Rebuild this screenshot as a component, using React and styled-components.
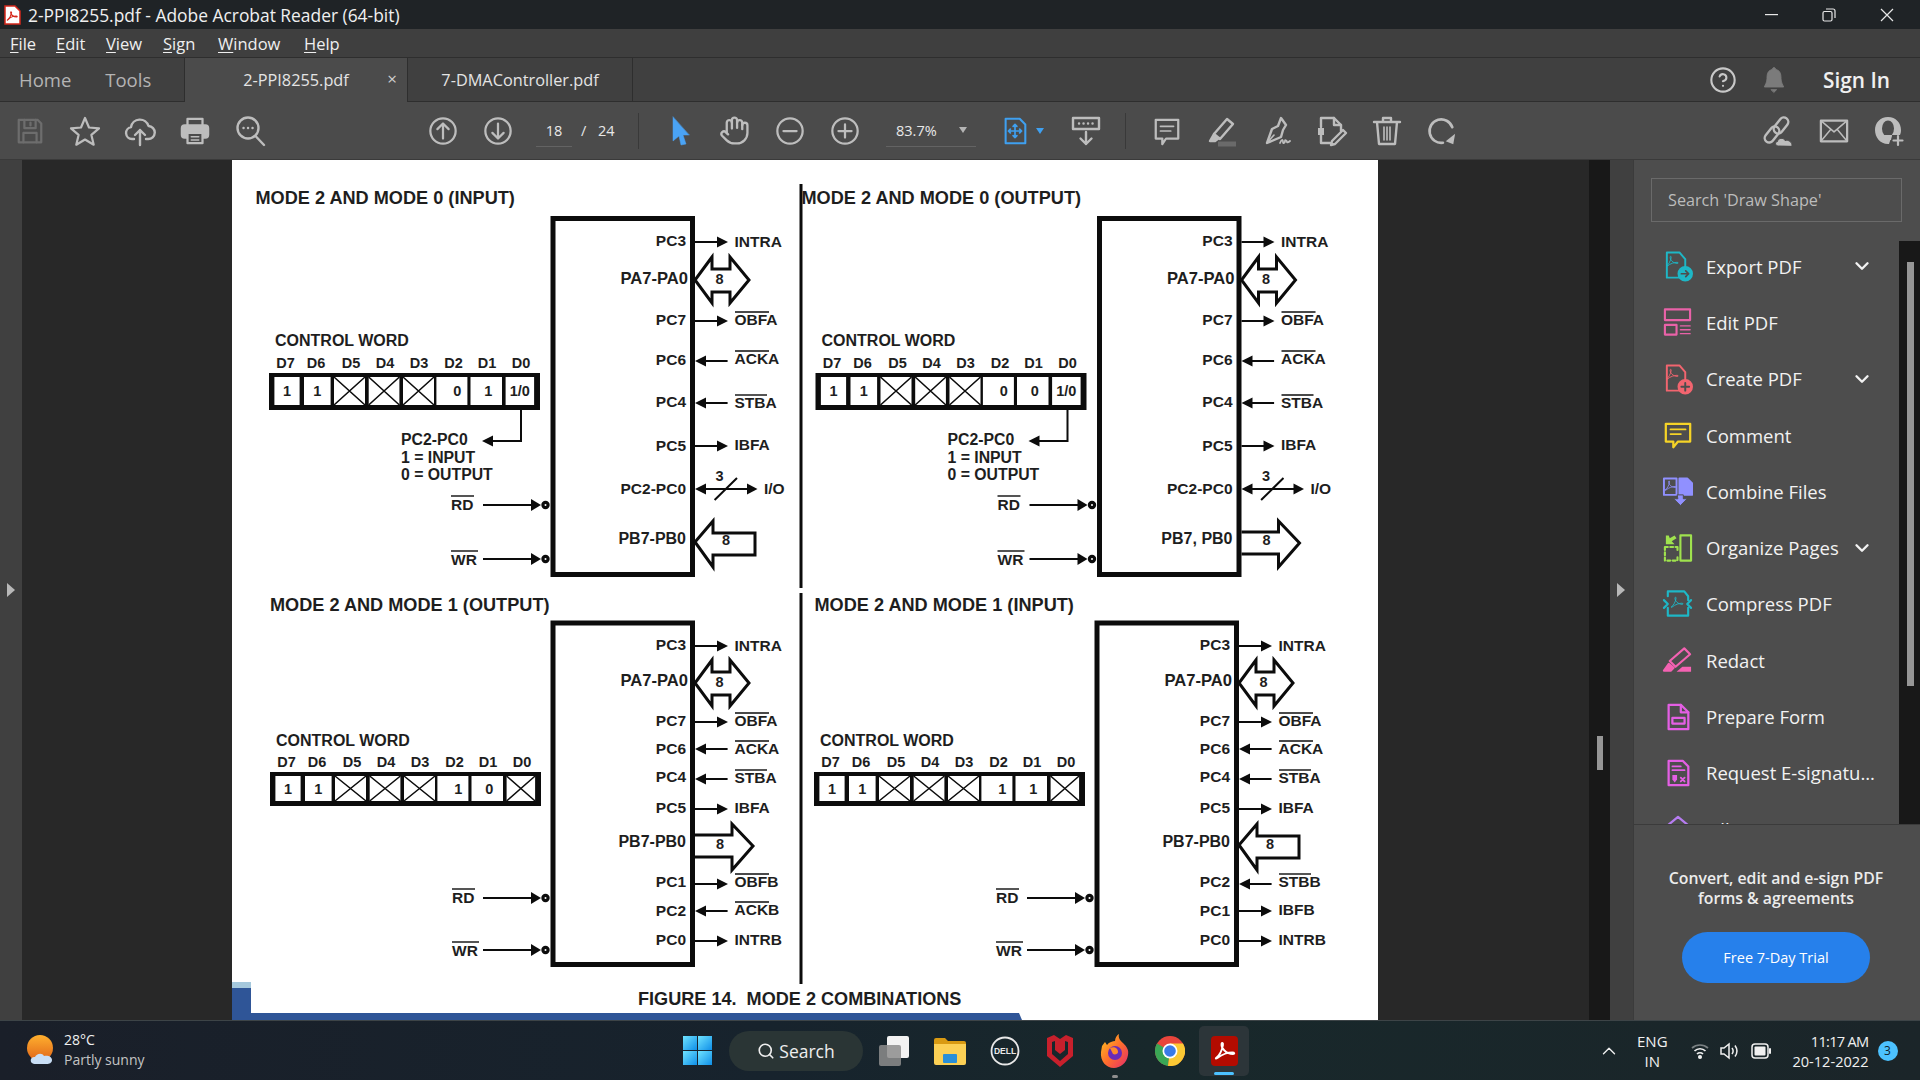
import React from "react"
import styled, { createGlobalStyle } from "styled-components"
import { CircleHelp, Hand, Search, ChevronDown, ChevronUp } from "lucide-react"

const GlobalStyle = createGlobalStyle`
  html, body {
    margin: 0;
    padding: 0;
    background: #282828;
  }
  body {
    font-family: "Open Sans", "Noto Sans", sans-serif;
    overflow: hidden;
  }
`

const Screen = styled.div`
  width: 1920px;
  height: 1080px;
  display: flex;
  flex-direction: column;
  overflow: hidden;
`

/* window chrome */
const TitleBar = styled.div`
  height: 29px;
  flex: none;
  display: flex;
  align-items: center;
  background: #1f2326;
  color: #f0f0f0;
  font-size: 17.4px;
  padding: 0 4px;
`
const TitleText = styled.span`
  flex: 1;
  margin-left: 7px;
`
const WinBtn = styled.span`
  width: 58px;
  height: 29px;
  display: flex;
  align-items: center;
  justify-content: center;
  color: #e8e8e8;
`
const MenuBar = styled.div`
  height: 28px;
  flex: none;
  display: flex;
  align-items: center;
  background: #3f3f3f;
  border-bottom: 1px solid #2e2e2e;
  color: #efefef;
  font-size: 16.5px;
  padding-left: 10px;
`
const MenuItem = styled.span`
  width: ${(p) => p.$w}px;
  u {
    text-underline-offset: 2px;
  }
`
const TabBar = styled.div`
  height: 44px;
  flex: none;
  display: flex;
  background: #404040;
  color: #c9c9c9;
`
const NavTabs = styled.div`
  width: 184px;
  display: flex;
  align-items: center;
  gap: 34px;
  padding-left: 19px;
  box-sizing: border-box;
  font-size: 18.5px;
  color: #b4b4b4;
  border-bottom: 1px solid #2e2e2e;
`
const DocTab = styled.div`
  position: relative;
  width: ${(p) => p.$w}px;
  display: flex;
  align-items: center;
  justify-content: center;
  box-sizing: border-box;
  font-size: 16.3px;
  color: #e4e4e4;
  background: ${(p) => (p.$active ? "#4b4b4b" : "#404040")};
  border-left: ${(p) => (p.$active ? "1px solid #2e2e2e" : "none")};
  border-right: 1px solid #2e2e2e;
  border-bottom: ${(p) => (p.$active ? "none" : "1px solid #2e2e2e")};
`
const TabClose = styled.span`
  position: absolute;
  right: 10px;
  top: 9px;
  font-size: 17px;
  color: #cfcfcf;
`
const TabFill = styled.div`
  flex: 1;
  display: flex;
  align-items: center;
  justify-content: flex-end;
  border-bottom: 1px solid #2e2e2e;
  padding-right: 30px;
`
const SignIn = styled.span`
  font-size: 20.8px;
  font-weight: 600;
  color: #f0f0f0;
  margin-left: 35px;
`
const BellWrap = styled.span`
  display: flex;
  margin-left: 23px;
`

/* toolbar */
const ToolBar = styled.div`
  height: 58px;
  flex: none;
  display: flex;
  align-items: center;
  background: #4b4b4b;
  padding-left: 2px;
  border-bottom: 1px solid #3a3a3a;
  box-sizing: border-box;
`
const Tool = styled.span`
  width: ${(p) => p.$w || 55}px;
  margin-left: ${(p) => p.$ml || 0}px;
  display: flex;
  align-items: center;
  justify-content: center;
  color: ${(p) => p.$c || "#bdbdbd"};
`
const ToolDivider = styled.span`
  width: 1px;
  height: 36px;
  background: #393939;
  margin-left: ${(p) => p.$ml}px;
`
const PageBox = styled.div`
  margin-left: 11px;
  width: 36px;
  height: 33px;
  box-sizing: border-box;
  border-bottom: 1px solid #636363;
  display: flex;
  align-items: center;
  justify-content: center;
  color: #e8e8e8;
  font-size: 14.5px;
`
const PageTotal = styled.span`
  margin-left: 9px;
  width: 57px;
  color: #e8e8e8;
  font-size: 14.5px;
  word-spacing: 8px;
`
const ZoomBox = styled.div`
  margin-left: 14px;
  width: 90px;
  height: 33px;
  box-sizing: border-box;
  border-bottom: 1px solid #636363;
  display: flex;
  align-items: center;
  color: #e8e8e8;
  font-size: 14.5px;
  padding-left: 10px;
  gap: 22px;
`
const Caret = styled.span`
  width: 0;
  height: 0;
  border-left: 4px solid transparent;
  border-right: 4px solid transparent;
  border-top: 6px solid ${(p) => p.$c || "#b4b4b4"};
`
const FitTool = styled.span`
  margin-left: 12px;
  width: 70px;
  display: flex;
  align-items: center;
  justify-content: flex-start;
  gap: 6px;
  padding-left: 12px;
  box-sizing: border-box;
`

/* main area */
const Main = styled.div`
  flex: 1;
  display: flex;
  min-height: 0;
`
const LeftRail = styled.div`
  width: 22px;
  flex: none;
  background: #404040;
  display: flex;
  align-items: center;
  padding-left: 7px;
  box-sizing: border-box;
`
const DocArea = styled.div`
  flex: none;
  width: 1567px;
  background: #282828;
  padding-left: 210px;
  box-sizing: border-box;
`
const Sheet = styled.svg`
  display: block;
  width: 1146px;
  height: 860px;
  background: #fff;
`
const DocScroll = styled.div`
  width: 21px;
  flex: none;
  background: #181818;
  padding: 576px 0 0 8px;
  box-sizing: border-box;
`
const DocThumb = styled.div`
  width: 6px;
  height: 34px;
  background: #969696;
`
const RightRail = styled.div`
  width: 23px;
  flex: none;
  background: #404040;
  display: flex;
  align-items: center;
  padding-left: 7px;
  box-sizing: border-box;
`
const Triangle = styled.span`
  width: 0;
  height: 0;
  border-top: 7px solid transparent;
  border-bottom: 7px solid transparent;
  border-left: 8px solid #b8b8b8;
`
const SidePanel = styled.div`
  flex: 1;
  display: flex;
  flex-direction: column;
  background: #4d4d4d;
  border-left: 1px solid #3b3b3b;
  min-width: 0;
`
const SearchBox = styled.div`
  flex: none;
  height: 44px;
  width: 251px;
  box-sizing: border-box;
  margin: 18px 0 17px 17px;
  border: 1px solid #6a6a6a;
  color: #bcbcbc;
  font-size: 16.2px;
  display: flex;
  align-items: center;
  padding-left: 16px;
`
const ListWrap = styled.div`
  height: 585px;
  flex: none;
  display: flex;
  overflow: hidden;
`
const ToolList = styled.div`
  flex: 1;
  min-width: 0;
  margin-top: -1px;
`
const ToolRow = styled.div`
  height: 56.3px;
  display: flex;
  align-items: center;
  padding: 0 20px 0 28px;
  gap: 13px;
  color: #f2f2f2;
  font-size: 18.5px;
  white-space: nowrap;
`
const ToolIcon = styled.span`
  width: 31px;
  flex: none;
  display: flex;
  justify-content: center;
`
const ToolLabel = styled.span`
  flex: 1;
  white-space: nowrap;
`
const MoreChevron = styled(ChevronDown)`
  flex: none;
  margin: 0 6px 0 -20px;
`
const ListScroll = styled.div`
  width: 21px;
  flex: none;
  margin-top: 2px;
  background: #181818;
  padding: 21px 0 0 8px;
  box-sizing: border-box;
`
const ListThumb = styled.div`
  width: 7px;
  height: 424px;
  background: #969696;
`
const Promo = styled.div`
  flex: 1;
  border-top: 1px solid #3b3b3b;
  display: flex;
  flex-direction: column;
  align-items: center;
  padding: 43px 2px 0 0;
  color: #ececec;
  font-size: 15.8px;
  font-weight: 600;
  line-height: 20px;
  text-align: center;
`
const TrialBtn = styled.div`
  margin-top: 24px;
  width: 188px;
  height: 51px;
  border-radius: 26px;
  background: #2680eb;
  color: #fff;
  font-size: 14.5px;
  font-weight: 400;
  display: flex;
  align-items: center;
  justify-content: center;
`

/* taskbar */
const TaskBar = styled.div`
  height: 60px;
  flex: none;
  display: flex;
  align-items: center;
  border-top: 1px solid #3d4447;
  box-sizing: border-box;
  background: linear-gradient(90deg, #1a1f29 0%, #17232d 40%, #18282b 60%, #1b2529 100%);
  color: #f0f0f0;
`
const Weather = styled.div`
  width: 683px;
  flex: none;
  display: flex;
  align-items: center;
  padding: 0 0 2px 27px;
  gap: 9px;
  box-sizing: border-box;
`
const TwoLines = styled.div`
  display: flex;
  flex-direction: column;
  font-size: ${(p) => p.$size || 14}px;
  line-height: 20px;
  text-align: ${(p) => p.$align || "left"};
`
const Dim = styled.span`
  color: #c4c4c4;
`
const WinLogo = styled.span`
  width: 46px;
  flex: none;
  display: flex;
`
const SearchPill = styled.div`
  width: 134px;
  height: 40px;
  flex: none;
  border-radius: 20px;
  background: #2a3535;
  display: flex;
  align-items: center;
  justify-content: center;
  gap: 4px;
  font-size: 17.5px;
  color: #eee;
`
const TaskSlot = styled.span`
  position: relative;
  width: 55px;
  height: 50px;
  flex: none;
  display: flex;
  align-items: center;
  justify-content: center;
  margin-left: ${(p) => p.$ml || 0}px;
  ${(p) => p.$active && "background: #2c3539; border-radius: 5px; width: 50px; margin: 0 2px;"}
`
const Running = styled.span`
  position: absolute;
  left: 50%;
  bottom: ${(p) => p.$bottom}px;
  width: ${(p) => p.$w}px;
  height: 3px;
  margin-left: ${(p) => -p.$w / 2}px;
  border-radius: 2px;
  background: ${(p) => p.$c};
`
const Tray = styled.div`
  flex: 1;
  display: flex;
  align-items: center;
  padding-left: 347px;
`
const TrayIcon = styled.span`
  display: flex;
  margin-left: ${(p) => p.$ml}px;
`
const Clock = styled(TwoLines)`
  margin-left: 4px;
  width: 93px;
  white-space: nowrap;
  font-size: 14.6px;
`
const ClockTime = styled.span`
  letter-spacing: -0.7px;
`
const Badge = styled.span`
  width: 20px;
  height: 20px;
  border-radius: 50%;
  margin-left: 9px;
  background: #4cc2ff;
  color: #10222c;
  font-size: 12px;
  display: flex;
  align-items: center;
  justify-content: center;
`

/* icons */
const Ico = styled.svg.attrs((p) => ({
  viewBox: "0 0 32 32",
  width: p.$s || 30,
  height: p.$s || 30,
}))`
  display: block;
  fill: none;
  stroke: ${(p) => p.$c || "currentColor"};
  stroke-width: ${(p) => p.$w || 2.4};
  stroke-linecap: round;
  stroke-linejoin: round;
`
const Swoosh = ({ transform, c, w = 1.4 }) => (
  <path
    transform={transform}
    d="M6 23c3-2 6-8 7-13 .4-2.4-1.4-3.4-1.6-1C11 13 16 19 23 19c2 0 1.6-1.8-.6-1.800-4 0-11 2-15.4 6-1 1-1.6.6-1-.2z"
    fill="none"
    stroke={c}
    strokeWidth={w}
  />
)

const SaveIcon = () => (
  <Ico $c="#6d6d6d" $s={30}>
    <path d="M4 4h20l4 4v20H4z" />
    <path d="M10 4v9h12V4M16.5 7v3M9 28V18h14v10" />
  </Ico>
)
const StarIcon = () => (
  <Ico $s={32} $w={2.2}>
    <path d="M16 3l4 9.5 10 .8-7.6 6.6 2.3 9.8L16 24.5l-8.700 5.200 2.300-9.800L2 13.3l10-.8z" />
  </Ico>
)
const UploadIcon = () => (
  <Ico $s={32}>
    <path d="M10 24H8a6 6 0 0 1-1-11.900A9 9 0 0 1 24.500 11 6.500 6.500 0 0 1 24 24h-2" />
    <path d="M16 30V15M11 20l5-5 5 5" />
  </Ico>
)
const PrintIcon = () => (
  <Ico $s={30}>
    <path d="M8 10V3h16v7" />
    <rect x="2" y="10" width="28" height="13" rx="3" fill="currentColor" />
    <rect x="8" y="18" width="16" height="11" fill="#4b4b4b" />
    <path d="M12 22h8M12 25.500h8" strokeWidth="1.600" />
  </Ico>
)
const FindIcon = () => (
  <Ico $s={32}>
    <circle cx="14" cy="13" r="10.500" />
    <path d="M21.500 21l8.500 9" />
    <path d="M9.500 13h.1M14 13h.1M18.500 13h.1" />
  </Ico>
)
const CircleUp = ({ down }) => (
  <Ico $s={30}>
    <circle cx="16" cy="16" r="13.500" />
    {down ? <path d="M16 8v16M10 18l6 6 6-6" /> : <path d="M16 24V8M10 14l6-6 6 6" />}
  </Ico>
)
const CircleMath = ({ plus }) => (
  <Ico $s={30}>
    <circle cx="16" cy="16" r="13.500" />
    <path d={plus ? "M9 16h14M16 9v14" : "M9 16h14"} />
  </Ico>
)
const CursorIcon = () => (
  <Ico $s={32} $c="#4aa3f5" $w={0.5}>
    <path d="M9 2v24l6-5 2 9 5-1-3-9h6z" fill="#4aa3f5" />
  </Ico>
)
const FitIcon = () => (
  <Ico $s={30} $c="#3fa0f0" $w={2.2}>
    <path d="M6 3h15l6 6v20H6z" />
    <path d="M16 9v14M9 16h14M14 11l2-2 2 2M14 21l2 2 2-2M11 14l-2 2 2 2M21 14l2 2-2 2" strokeWidth="1.800" />
  </Ico>
)
const ReadIcon = () => (
  <Ico $s={32}>
    <rect x="3" y="3" width="26" height="11" />
    <path d="M9 8.500h.1M13.500 8.500h.1M18 8.500h.1M22.500 8.500h.1" />
    <path d="M16 17v12M10.500 23.500L16 29l5.500-5.500" />
  </Ico>
)
const CommentIcon = () => (
  <Ico $s={30}>
    <path d="M4 4h24v20H15l-4 6v-6H4z" />
    <path d="M9 11h14M9 16h11" strokeWidth="1.800" />
  </Ico>
)
const HighlightIcon = () => (
  <Ico $s={32}>
    <path d="M21 4l6 5-13 15-6-5z" />
    <path d="M8 19l-4 7h5l4-3" fill="currentColor" />
    <path d="M12 29h18" stroke="#6a6a6a" strokeWidth="5" strokeLinecap="butt" />
  </Ico>
)
const SignIcon = () => (
  <Ico $s={32}>
    <path d="M20 3l5 7-3 5-2 7-14 6 5-14 6-3z" />
    <path d="M6 28l7-8" strokeWidth="1.600" />
    <path d="M19 28c2-5 3-3 3-1s2 1 2-1 2 0 2 1 2 0 3-1" strokeWidth="1.800" />
  </Ico>
)
const EditFileIcon = () => (
  <Ico $s={32}>
    <path d="M5 12V3h13l7 7v6M5 20v8h9" />
    <path d="M2 13h6v7H2z" fill="currentColor" stroke="none" />
    <path d="M18 3v7h7" />
    <path d="M27 15l3 3-11 11-4 1 1-4z" />
  </Ico>
)
const TrashIcon = () => (
  <Ico $s={32}>
    <path d="M3 7h26M12 7V3h8v4M6 7l2 22h16l2-22" />
    <path d="M13 12v13M16 12v13M19 12v13" strokeWidth="1.600" />
  </Ico>
)
const RotateIcon = () => (
  <Ico $s={30}>
    <path d="M27 12A12.500 12.500 0 1 0 17 28.500" strokeWidth="2.800" />
    <path d="M30 19l-10 8 8 3z" fill="currentColor" stroke="none" />
  </Ico>
)
const ShareIcon = () => (
  <Ico $s={32}>
    <rect x="1" y="15" width="18" height="9" rx="4.500" transform="rotate(-52 10 19.500)" />
    <rect x="10" y="6" width="18" height="9" rx="4.500" transform="rotate(-52 19 10.500)" />
    <path d="M16 31c-3 0-3.500-4-.5-4.500 .5-3.500 6-4.500 7.500-1 3.500-1 7.500 1.500 7 5.500z" fill="currentColor" stroke="#4b4b4b" strokeWidth="1" />
  </Ico>
)
const MailIcon = () => (
  <Ico $s={30}>
    <rect x="2" y="5" width="28" height="22" />
    <path d="M2 5l14 12L30 5M2 27l10-12M30 27L20 15" strokeWidth="1.600" />
  </Ico>
)
const UserIcon = () => (
  <Ico $s={32} $w={1}>
    <path d="M15 2c8 0 13 6 13 13 0 2-.3 3.500-1 5h-8l-3 9h-1C7 29 2 22 2 15 2 8 7 2 15 2z" fill="currentColor" stroke="none" />
    <ellipse cx="15" cy="13.500" rx="6" ry="8" fill="#4b4b4b" stroke="none" />
    <path d="M11 20h8l-1 5h-6z" fill="currentColor" stroke="none" />
    <path d="M25 21v9M20.500 25.500h9" strokeWidth="2.200" />
  </Ico>
)
const BellIcon = () => (
  <Ico $s={28} $c="#7b7b7b" $w={1}>
    <path d="M16 2c1.500 0 2 1 2 2 5 1 6 5 6 10 0 5 2 7 3 10H5c1-3 3-5 3-10 0-5 1-9 6-10 0-1 .5-2 2-2z" fill="#7b7b7b" />
    <path d="M13 27h6l-3 3z" fill="#7b7b7b" />
  </Ico>
)

const PANEL_TOOLS = [
  {
    name: "Export PDF",
    more: true,
    c: "#1eb7c6",
    icon: (c) => (
      <Ico $c={c} $s={32} $w={2}>
        <path d="M5 28V2h13l6 7v8M5 28h13" />
        <Swoosh c={c} transform="translate(1 1) scale(.65)" />
        <circle cx="24" cy="24" r="7" fill={c} />
        <path d="M20 24h7M24.500 21l3 3-3 3" stroke="#4d4d4d" strokeWidth="1.800" />
      </Ico>
    ),
  },
  {
    name: "Edit PDF",
    c: "#e962a8",
    icon: (c) => (
      <Ico $c={c} $s={32} $w={2.2}>
        <rect x="3" y="3" width="26" height="11" />
        <rect x="3" y="19" width="12" height="10" />
        <path d="M19 20h10M19 24h10M19 28h10" strokeWidth="1.500" />
      </Ico>
    ),
  },
  {
    name: "Create PDF",
    more: true,
    c: "#f2656f",
    icon: (c) => (
      <Ico $c={c} $s={32} $w={2}>
        <path d="M5 28V2h13l6 7v8M5 28h13" />
        <Swoosh c={c} transform="translate(1 1) scale(.65)" />
        <circle cx="24" cy="24" r="7" fill={c} />
        <path d="M20 24h8M24 20v8" stroke="#4d4d4d" strokeWidth="2" />
      </Ico>
    ),
  },
  {
    name: "Comment",
    c: "#f5d327",
    icon: (c) => (
      <Ico $c={c} $s={30} $w={2.4}>
        <path d="M3 4h26v19H16l-5 6v-6H3z" />
        <path d="M8 10h16M8 15h11" strokeWidth="2" />
      </Ico>
    ),
  },
  {
    name: "Combine Files",
    c: "#9090ff",
    icon: (c) => (
      <Ico $c={c} $s={34} $w={2}>
        <path d="M2 3h13v17H2z" />
        <Swoosh c={c} transform="translate(0 1) scale(.6)" />
        <path d="M18 3h8l5 5v12H18z" fill={c} />
        <path d="M16 20h6v4h4l-7 7-7-7h4z" fill={c} stroke="#4d4d4d" strokeWidth="1" />
      </Ico>
    ),
  },
  {
    name: "Organize Pages",
    more: true,
    c: "#9fe24e",
    icon: (c) => (
      <Ico $c={c} $s={32} $w={2.2}>
        <rect x="19" y="3" width="11" height="26" />
        <path d="M3 15h13M3 15v14h13v-5M16 15v5" strokeDasharray="3 2.500" />
        <path d="M4 3v9h9l-3-3 5-3-2-3-5 3-1-3z" fill={c} stroke="none" />
      </Ico>
    ),
  },
  {
    name: "Compress PDF",
    c: "#1eb7c6",
    icon: (c) => (
      <Ico $c={c} $s={32} $w={2.2}>
        <path d="M6 8V3h17l4 5v4M27 20v8H6v-8" />
        <path d="M2 12l4 4-4 4M30 12l-4 4 4 4" />
        <Swoosh c={c} transform="translate(6 4) scale(.65)" />
      </Ico>
    ),
  },
  {
    name: "Redact",
    c: "#f462b2",
    icon: (c) => (
      <Ico $c={c} $s={32} $w={2.2}>
        <path d="M23 4l6 6-15 13-6-6z" />
        <path d="M7 20l-5 7h7l3-3z" fill={c} />
        <path d="M15 28l6-5h9v5z" fill={c} stroke="none" />
      </Ico>
    ),
  },
  {
    name: "Prepare Form",
    c: "#e45fe4",
    icon: (c) => (
      <Ico $c={c} $s={30} $w={2.4}>
        <path d="M6 3h13l8 8v18H6z" />
        <path d="M19 3v8h8" />
        <rect x="10" y="17" width="13" height="6" />
      </Ico>
    ),
  },
  {
    name: "Request E-signatu...",
    c: "#e45fe4",
    icon: (c) => (
      <Ico $c={c} $s={30} $w={2.4}>
        <path d="M6 3h15l6 6v20H6z" />
        <path d="M10 9h9M10 13h13" strokeWidth="1.800" />
        <path d="M10 18h5v5l-2.500 3-2.500-3z" fill={c} stroke="none" />
        <path d="M19 21l4 4M23 21l-4 4" strokeWidth="2" />
      </Ico>
    ),
  },
  {
    name: "Fill & Sign",
    c: "#b67cf0",
    icon: (c) => (
      <Ico $c={c} $s={30} $w={2.4}>
        <path d="M16 3l12 10v14H4V13z" />
      </Ico>
    ),
  },
]

/* --- the PDF page, drawn in screen coordinates --- */
const DText = styled.text`
  font-family: "Liberation Sans", Arial, sans-serif;
  font-weight: 700;
  font-size: ${(p) => p.$size || 15.5}px;
  fill: #1e1e1e;
`
const Stroke = styled.g`
  stroke: #0c0c0c;
  stroke-width: ${(p) => p.$w || 2}px;
  fill: none;
`

const CELLS = [
  [5.4, 25.2],
  [35, 26.6],
  [65, 31],
  [99.7, 30.7],
  [134, 31],
  [167.4, 31],
  [201.5, 31.5],
  [236.6, 28.5],
]
const BIT_X = [285.5, 316, 351, 385, 419, 453.5, 487, 521]
const CELL_NUDGE = [0, 0, 0, 0, 0, 5.5, 2, 0]

function Register({ top, bottom, cellTop, cellBottom, labelY, wordY, textY, values, dx = 0 }) {
  return (
    <g transform={`translate(${dx} 0)`}>
      <DText x={275} y={wordY} $size={16}>CONTROL WORD</DText>
      {BIT_X.map((x, i) => (
        <DText key={i} x={x} y={labelY} $size={14.5} textAnchor="middle">{`D${7 - i}`}</DText>
      ))}
      <rect x={269} y={top} width={271} height={bottom - top} fill="#0c0c0c" />
      {CELLS.map(([cx, w], i) => {
        const x = 269 + cx
        return (
          <g key={i}>
            <rect x={x} y={cellTop} width={w} height={cellBottom - cellTop} fill="#fff" />
            {values[i] === "X" ? (
              <Stroke $w={1.6}>
                <path d={`M${x} ${cellTop}L${x + w} ${cellBottom}M${x + w} ${cellTop}L${x} ${cellBottom}`} />
              </Stroke>
            ) : (
              <DText x={x + w / 2 + CELL_NUDGE[i]} y={textY} $size={14.5} textAnchor="middle">
                {values[i]}
              </DText>
            )}
          </g>
        )
      })}
    </g>
  )
}

function SignalArrow({ y, dir }) {
  if (dir === "out") {
    return (
      <g>
        <Stroke><path d={`M695 ${y}H719`} /></Stroke>
        <polygon points={`717,${y - 5.5} 728,${y} 717,${y + 5.5}`} fill="#0c0c0c" />
      </g>
    )
  }
  return (
    <g>
      <Stroke><path d={`M700 ${y}H727.6`} /></Stroke>
      <polygon points={`695,${y} 706,${y - 5.5} 706,${y + 5.5}`} fill="#0c0c0c" />
    </g>
  )
}

function Rows({ rows }) {
  return rows.map(([pin, pinY, lineY, dir, sig, sigY, bar]) => (
    <g key={pin}>
      <DText x={686} y={pinY} textAnchor="end">{pin}</DText>
      <SignalArrow y={lineY} dir={dir} />
      <DText x={734.5} y={sigY}>{sig}</DText>
      {bar && (
        <Stroke $w={1.4}>
          <path d={`M735 ${sigY - 13}h${bar}`} />
        </Stroke>
      )}
    </g>
  ))
}

function BiBus({ cy }) {
  const t = cy - 23
  const b = cy + 23
  return (
    <g>
      <Stroke $w={3}>
        <path
          d={`M712 ${t}L695 ${cy}L712 ${b}V${cy + 12}H730V${b}L749 ${cy}L730 ${t}V${cy - 11}H712Z`}
          strokeLinejoin="miter"
        />
      </Stroke>
      <DText x={719.5} y={cy + 4} textAnchor="middle" $size={14.5}>8</DText>
    </g>
  )
}

function OutBus({ cy, tipX = 752, textY }) {
  const h = tipX - 21
  return (
    <g>
      <Stroke $w={3}>
        <path
          d={`M695 ${cy - 11}H${h}V${cy - 22}L${tipX} ${cy}L${h} ${cy + 24}V${cy + 11}H695`}
          strokeLinejoin="miter"
        />
      </Stroke>
      <DText x={720} y={textY} textAnchor="middle" $size={14.5}>8</DText>
    </g>
  )
}

function InBus({ cy, textY }) {
  return (
    <g>
      <Stroke $w={3}>
        <path
          d={`M713 ${cy - 21}L695 ${cy}L713 ${cy + 25}V${cy + 13}H755V${cy - 9}H713Z`}
          strokeLinejoin="miter"
        />
      </Stroke>
      <DText x={726} y={textY} textAnchor="middle" $size={14.5}>8</DText>
    </g>
  )
}

function ActiveLow({ name, y, lineY, x = 451, lineX = 483, width }) {
  return (
    <g>
      <DText x={x} y={y}>{name}</DText>
      <Stroke $w={1.4}><path d={`M${x} ${y - 14}h${width}`} /></Stroke>
      <Stroke><path d={`M${lineX} ${lineY}H533`} /></Stroke>
      <polygon points={`531,${lineY - 6} 541,${lineY} 531,${lineY + 6}`} fill="#0c0c0c" />
      <Stroke $w={3.2}><circle cx={545.5} cy={lineY} r={2.6} /></Stroke>
    </g>
  )
}

const TOP_ROWS = [
  ["PC3", 246, 242, "out", "INTRA", 247],
  ["PC7", 325, 321, "out", "OBFA", 325, 34],
  ["PC6", 365, 361, "in", "ACKA", 364, 34],
  ["PC4", 407, 403, "in", "STBA", 408, 32],
  ["PC5", 451, 446, "out", "IBFA", 450],
]
const upperRows = [
  ["PC3", 650, 646, "out", "INTRA", 651],
  ["PC7", 726, 722, "out", "OBFA", 726, 34],
  ["PC6", 754, 749, "in", "ACKA", 754, 34],
  ["PC4", 782, 779, "in", "STBA", 783, 32],
  ["PC5", 813, 809, "out", "IBFA", 813],
]
const BL_ROWS = [
  ...upperRows,
  ["PC1", 887, 884, "out", "OBFB", 887, 34],
  ["PC2", 916, 911, "in", "ACKB", 915, 34],
  ["PC0", 945, 941, "out", "INTRB", 945],
]
const BR_ROWS = [
  ...upperRows,
  ["PC2", 887, 884, "in", "STBB", 887, 32],
  ["PC1", 916, 911, "out", "IBFB", 915],
  ["PC0", 945, 941, "out", "INTRB", 945],
]

function TopQuad({ dx, title, titleX, values, bus, busLabel }) {
  return (
    <g>
      <DText x={titleX} y={204} $size={18.15}>{title}</DText>
      <g transform={`translate(${dx} 0)`}>
        <Stroke $w={5}><rect x={553} y={218.5} width={139.5} height={356} /></Stroke>
        <Rows rows={TOP_ROWS} />
        <DText x={688} y={284} $size={16.6} textAnchor="end">PA7-PA0</DText>
        <BiBus cy={280} />
        <DText x={686} y={494} textAnchor="end">PC2-PC0</DText>
        <Stroke><path d="M700 489H749M714.6 500L737 478" /></Stroke>
        <polygon points="695,489 706,483.5 706,494.5" fill="#0c0c0c" />
        <polygon points="747,483.5 757.5,489 747,494.5" fill="#0c0c0c" />
        <DText x={719.5} y={481} textAnchor="middle" $size={14.5}>3</DText>
        <DText x={764} y={494}>I/O</DText>
        <DText x={686} y={544} $size={16} textAnchor="end">{busLabel}</DText>
        {bus === "in" ? <InBus cy={542} textY={545} /> : <OutBus cy={543} tipX={753} textY={545} />}
        <Stroke>
          <path d="M521 410V441H492" />
        </Stroke>
        <polygon points="482,441 493,435.5 493,446.5" fill="#0c0c0c" />
        <DText x={401} y={445} $size={15.8}>PC2-PC0</DText>
        <DText x={401} y={463} $size={15.8}>1 = INPUT</DText>
        <DText x={401} y={480} $size={15.8}>0 = OUTPUT</DText>
        <ActiveLow name="RD" y={510} lineY={505} width={23} />
        <ActiveLow name="WR" y={565} lineY={559} width={27} />
      </g>
      <Register
        dx={dx}
        top={373}
        bottom={410}
        cellTop={377}
        cellBottom={405}
        labelY={368}
        wordY={346}
        textY={396}
        values={values}
      />
    </g>
  )
}

function BottomQuad({ dx, title, titleX, rows, values, bus }) {
  return (
    <g>
      <DText x={titleX} y={611} $size={18.15}>{title}</DText>
      <g transform={`translate(${dx} 0)`}>
        <Stroke $w={5}><rect x={553} y={623} width={139.5} height={341.5} /></Stroke>
        <Rows rows={rows} />
        <DText x={688} y={686} $size={16.6} textAnchor="end">PA7-PA0</DText>
        <BiBus cy={683} />
        <DText x={686} y={847} $size={16} textAnchor="end">PB7-PB0</DText>
        {bus === "in" ? <InBus cy={845} textY={849} /> : <OutBus cy={846} tipX={753} textY={849} />}
        <ActiveLow name="RD" y={903} lineY={898} x={452} width={23} />
        <ActiveLow name="WR" y={956} lineY={950} x={452} width={27} />
      </g>
      <Register
        dx={dx + 1}
        top={772}
        bottom={806}
        cellTop={776}
        cellBottom={801}
        labelY={767}
        wordY={746}
        textY={794}
        values={values}
      />
    </g>
  )
}

function DiagramPage() {
  return (
    <Sheet viewBox="232 160 1146 860">
      <TopQuad
        dx={0}
        title="MODE 2 AND MODE 0 (INPUT)"
        titleX={255.5}
        values={["1", "1", "X", "X", "X", "0", "1", "1/0"]}
        bus="in"
        busLabel="PB7-PB0"
      />
      <TopQuad
        dx={546.5}
        title="MODE 2 AND MODE 0 (OUTPUT)"
        titleX={801.5}
        values={["1", "1", "X", "X", "X", "0", "0", "1/0"]}
        bus="out"
        busLabel="PB7, PB0"
      />
      <BottomQuad
        dx={0}
        title="MODE 2 AND MODE 1 (OUTPUT)"
        titleX={270}
        rows={BL_ROWS}
        values={["1", "1", "X", "X", "X", "1", "0", "X"]}
        bus="out"
      />
      <BottomQuad
        dx={544}
        title="MODE 2 AND MODE 1 (INPUT)"
        titleX={814.5}
        rows={BR_ROWS}
        values={["1", "1", "X", "X", "X", "1", "1", "X"]}
        bus="in"
      />
      <Stroke $w={3}>
        <path d="M801 184V588M801 593V984" />
      </Stroke>
      <DText x={638} y={1005} $size={18.1}>{"FIGURE 14.\u00a0\u00a0MODE 2 COMBINATIONS"}</DText>
      <rect x={232} y={982} width={19} height={6} fill="#a5c8dc" />
      <rect x={232} y={988} width={19} height={25} fill="#2f5597" />
      <polygon points="232,1013 1019,1013 1022,1020 232,1020" fill="#2f5597" />
    </Sheet>
  )
}

/* taskbar glyphs */
const WeatherIcon = () => (
  <svg width="28" height="30" viewBox="0 0 28 30">
    <defs>
      <linearGradient id="sun" x1="0" y1="0" x2="0" y2="1">
        <stop offset="0" stopColor="#ffb02e" />
        <stop offset="1" stopColor="#e0651a" />
      </linearGradient>
    </defs>
    <ellipse cx="13" cy="13" rx="13" ry="13" fill="url(#sun)" />
    <path d="M9 29c-4 0-6-2-5-5 1-2 3-2 4-2 1-3 7-5 9-1 3-1 8 0 8 4 0 3-3 4-5 4z" fill="#c9def5" />
  </svg>
)
const WindowsLogo = () => (
  <svg width="29" height="29" viewBox="0 0 29 29">
    <defs>
      <linearGradient id="win" x1="0" y1="0" x2="1" y2="1">
        <stop offset="0" stopColor="#6fe3ff" />
        <stop offset="1" stopColor="#0f8fe8" />
      </linearGradient>
    </defs>
    <rect width="14" height="14" fill="url(#win)" />
    <rect x="15" width="14" height="14" fill="url(#win)" />
    <rect y="15" width="14" height="14" fill="url(#win)" />
    <rect x="15" y="15" width="14" height="14" fill="url(#win)" />
  </svg>
)
const TaskViewIcon = () => (
  <svg width="32" height="30" viewBox="0 0 32 30">
    <rect x="8" y="0" width="22" height="22" rx="2" fill="#f2f2f2" />
    <rect x="0" y="9" width="22" height="21" rx="2" fill="#8d8d8d" opacity=".85" />
  </svg>
)
const FolderIcon = () => (
  <svg width="32" height="28" viewBox="0 0 32 28">
    <path d="M0 3a2 2 0 0 1 2-2h9l3 3h16a2 2 0 0 1 2 2v4H0z" fill="#d99a12" />
    <path d="M0 7h32v19a2 2 0 0 1-2 2H2a2 2 0 0 1-2-2z" fill="#fcd055" />
    <rect x="9" y="17" width="14" height="9" rx="1" fill="#2a8fd8" />
  </svg>
)
const DellText = styled.text`
  font-family: "Liberation Sans", Arial, sans-serif;
  font-weight: 700;
  font-size: 8.5px;
  fill: #e8e8e8;
`
const DellIcon = () => (
  <svg width="30" height="30" viewBox="0 0 30 30">
    <circle cx="15" cy="15" r="13.5" fill="none" stroke="#e8e8e8" strokeWidth="1.8" />
    <DellText x="15" y="18" textAnchor="middle">DELL</DellText>
  </svg>
)
const McafeeIcon = () => (
  <svg width="26" height="32" viewBox="0 0 26 32">
    <path
      d="M0 3l7-3 6 4 6-4 7 3v18l-13 11L0 21zM5 7v12l8 7 8-7V7l-3-1v9l-5 4-5-4V6z"
      fill="#c8202c"
    />
  </svg>
)
const FirefoxIcon = () => (
  <svg width="30" height="34" viewBox="0 0 30 34">
    <defs>
      <linearGradient id="ff" x1="0" y1="0" x2="1" y2="1">
        <stop offset="0" stopColor="#ffc91f" />
        <stop offset=".5" stopColor="#ff6f2c" />
        <stop offset="1" stopColor="#e32a6d" />
      </linearGradient>
    </defs>
    <path d="M2 12l3-4 2 3c2-3 6-4 8-4 0-3 2-6 4-7-1 4 1 6 4 9 4 4 6 7 5 12-1 8-8 13-14 13C6 34 0 27 1 18z" fill="url(#ff)" />
    <circle cx="15" cy="19" r="7" fill="#6a2bb8" />
    <path d="M10 14c4-2 8 0 8 4 0 2-3 3-5 2" fill="#ff8a2c" />
  </svg>
)
const ChromeIcon = () => (
  <svg width="30" height="30" viewBox="0 0 30 30">
    <circle cx="15" cy="15" r="15" fill="#e8453c" />
    <path d="M15 15L2 7.5A15 15 0 0 0 13 29.9z" fill="#3aa655" />
    <path d="M15 15l-2 14.9A15 15 0 0 0 28 7.5H15z" fill="#fcc934" />
    <circle cx="15" cy="15" r="7.5" fill="#fff" />
    <circle cx="15" cy="15" r="5.8" fill="#3b7be8" />
  </svg>
)
const AcrobatTile = () => (
  <svg width="27" height="30" viewBox="0 0 27 30">
    <rect width="27" height="30" rx="4" fill="#b30b00" />
    <path
      d="M5 22c3-2 6-8 7-13 .3-2-1-3-1.5-1C10 12 15 18 22 18c2 0 1.6-1.6-.6-1.6-4 0-10 2-15 5.600-1.500 1-2 .5-1.400 0z"
      fill="none"
      stroke="#fff"
      strokeWidth="1.8"
    />
  </svg>
)
const TitlePdfIcon = () => (
  <svg width="17" height="20" viewBox="0 0 17 20">
    <path d="M1 1h10l5 5v13H1z" fill="#fff" stroke="#d5281c" strokeWidth="1.5" />
    <path
      d="M3.500 15c2-1.500 3.500-4.500 4-7 .2-1-.7-1.500-.8-.5C6.500 9.500 9.500 12 12.500 12c1 0 .8-1-.3-1-2 0-5.500 1-8 3.500-.8.500-1 .8-.7.500z"
      fill="none"
      stroke="#d5281c"
      strokeWidth="1.2"
    />
  </svg>
)
const WifiIcon = () => (
  <svg width="18" height="18" viewBox="0 0 18 18" fill="none" stroke="#f0f0f0" strokeWidth="1.7">
    <path d="M1 6c4.500-4 11.500-4 16 0" opacity=".45" />
    <path d="M3.500 9c3-3 8-3 11 0M6 12c1.700-1.600 4.300-1.600 6 0" />
    <circle cx="9" cy="15" r="1.2" fill="#f0f0f0" />
  </svg>
)
const VolumeIcon = () => (
  <svg width="20" height="18" viewBox="0 0 20 18" fill="none" stroke="#f0f0f0" strokeWidth="1.5">
    <path d="M1 6h3l5-4v14l-5-4H1z" />
    <path d="M12 6c1.500 2 1.500 4 0 6M15 3.500c2.500 3.500 2.500 7.500 0 11" />
  </svg>
)
const BatteryIcon = () => (
  <svg width="21" height="16" viewBox="0 0 21 16">
    <rect x="1" y="1" width="16" height="14" rx="3" fill="none" stroke="#f0f0f0" strokeWidth="1.5" />
    <rect x="3.5" y="3.5" width="11" height="9" rx="1" fill="#f0f0f0" />
    <rect x="18" y="5" width="2" height="6" rx="1" fill="#f0f0f0" />
  </svg>
)

const MENUS = [
  ["F", "ile", 46],
  ["E", "dit", 50],
  ["V", "iew", 57],
  ["S", "ign", 55],
  ["W", "indow", 86],
  ["H", "elp", 40],
]

export default function App() {
  return (
    <Screen>
      <GlobalStyle />
      <TitleBar>
        <TitlePdfIcon />
        <TitleText>2-PPI8255.pdf - Adobe Acrobat Reader (64-bit)</TitleText>
        <WinBtn>
          <svg width="13" height="2"><rect width="13" height="1.2" fill="#e8e8e8" /></svg>
        </WinBtn>
        <WinBtn>
          <svg width="14" height="14" viewBox="0 0 14 14" fill="none" stroke="#e8e8e8" strokeWidth="1.2">
            <rect x="1" y="3.5" width="9" height="9.5" rx="1.5" />
            <path d="M4 1h7a2 2 0 0 1 2 2v7" />
          </svg>
        </WinBtn>
        <WinBtn>
          <svg width="14" height="14" viewBox="0 0 14 14" stroke="#e8e8e8" strokeWidth="1.2">
            <path d="M1 1l12 12M13 1L1 13" />
          </svg>
        </WinBtn>
      </TitleBar>

      <MenuBar>
        {MENUS.map(([key, rest, w]) => (
          <MenuItem key={key} $w={w}>
            <u>{key}</u>
            {rest}
          </MenuItem>
        ))}
      </MenuBar>

      <TabBar>
        <NavTabs>
          <span>Home</span>
          <span>Tools</span>
        </NavTabs>
        <DocTab $active $w={224}>
          2-PPI8255.pdf
          <TabClose>×</TabClose>
        </DocTab>
        <DocTab $w={225}>7-DMAController.pdf</DocTab>
        <TabFill>
          <CircleHelp size={28} color="#c8c8c8" strokeWidth={1.8} />
          <BellWrap>
            <BellIcon />
          </BellWrap>
          <SignIn>Sign In</SignIn>
        </TabFill>
      </TabBar>

      <ToolBar>
        <Tool><SaveIcon /></Tool>
        <Tool><StarIcon /></Tool>
        <Tool><UploadIcon /></Tool>
        <Tool><PrintIcon /></Tool>
        <Tool><FindIcon /></Tool>
        <Tool $ml={138}><CircleUp /></Tool>
        <Tool><CircleUp down /></Tool>
        <PageBox>18</PageBox>
        <PageTotal>/ 24</PageTotal>
        <ToolDivider $ml={0} />
        <Tool $ml={13}><CursorIcon /></Tool>
        <Tool><Hand size={31} strokeWidth={1.8} /></Tool>
        <Tool><CircleMath /></Tool>
        <Tool><CircleMath plus /></Tool>
        <ZoomBox>
          83.7%
          <Caret />
        </ZoomBox>
        <FitTool>
          <FitIcon />
          <Caret $c="#3fa0f0" />
        </FitTool>
        <Tool><ReadIcon /></Tool>
        <ToolDivider $ml={12} />
        <Tool $ml={13}><CommentIcon /></Tool>
        <Tool><HighlightIcon /></Tool>
        <Tool><SignIcon /></Tool>
        <Tool><EditFileIcon /></Tool>
        <Tool><TrashIcon /></Tool>
        <Tool><RotateIcon /></Tool>
        <Tool $ml={281}><ShareIcon /></Tool>
        <Tool $ml={1}><MailIcon /></Tool>
        <Tool><UserIcon /></Tool>
      </ToolBar>

      <Main>
        <LeftRail>
          <Triangle />
        </LeftRail>
        <DocArea>
          <DiagramPage />
        </DocArea>
        <DocScroll>
          <DocThumb />
        </DocScroll>
        <RightRail>
          <Triangle />
        </RightRail>
        <SidePanel>
          <SearchBox>Search 'Draw Shape'</SearchBox>
          <ListWrap>
            <ToolList>
              {PANEL_TOOLS.map((t) => (
                <ToolRow key={t.name}>
                  <ToolIcon>{t.icon(t.c)}</ToolIcon>
                  <ToolLabel>{t.name}</ToolLabel>
                  {t.more && <MoreChevron size={22} color="#f2f2f2" strokeWidth={2.6} />}
                </ToolRow>
              ))}
            </ToolList>
            <ListScroll>
              <ListThumb />
            </ListScroll>
          </ListWrap>
          <Promo>
            <span>
              Convert, edit and e-sign PDF
              <br />
              forms &amp; agreements
            </span>
            <TrialBtn>Free 7-Day Trial</TrialBtn>
          </Promo>
        </SidePanel>
      </Main>

      <TaskBar>
        <Weather>
          <WeatherIcon />
          <TwoLines>
            <span>28°C</span>
            <Dim>Partly sunny</Dim>
          </TwoLines>
        </Weather>
        <WinLogo>
          <WindowsLogo />
        </WinLogo>
        <SearchPill>
          <Search size={18} strokeWidth={2.2} />
          Search
        </SearchPill>
        <TaskSlot $ml={4}><TaskViewIcon /></TaskSlot>
        <TaskSlot><FolderIcon /></TaskSlot>
        <TaskSlot><DellIcon /></TaskSlot>
        <TaskSlot><McafeeIcon /></TaskSlot>
        <TaskSlot>
          <FirefoxIcon />
          <Running $bottom={-2} $w={6} $c="#8e8e8e" />
        </TaskSlot>
        <TaskSlot><ChromeIcon /></TaskSlot>
        <TaskSlot $active>
          <AcrobatTile />
          <Running $bottom={1} $w={20} $c="#4cc2ff" />
        </TaskSlot>
        <Tray>
          <ChevronUp size={22} strokeWidth={1.5} />
          <TrayIcon $ml={17}>
            <TwoLines $align="center" $size={15}>
              <span>ENG</span>
              <span>IN</span>
            </TwoLines>
          </TrayIcon>
          <TrayIcon $ml={23}><WifiIcon /></TrayIcon>
          <TrayIcon $ml={11}><VolumeIcon /></TrayIcon>
          <TrayIcon $ml={11}><BatteryIcon /></TrayIcon>
          <Clock $align="right">
            <ClockTime>11:17 AM</ClockTime>
            <span>20-12-2022</span>
          </Clock>
          <Badge>3</Badge>
        </Tray>
      </TaskBar>
    </Screen>
  )
}
